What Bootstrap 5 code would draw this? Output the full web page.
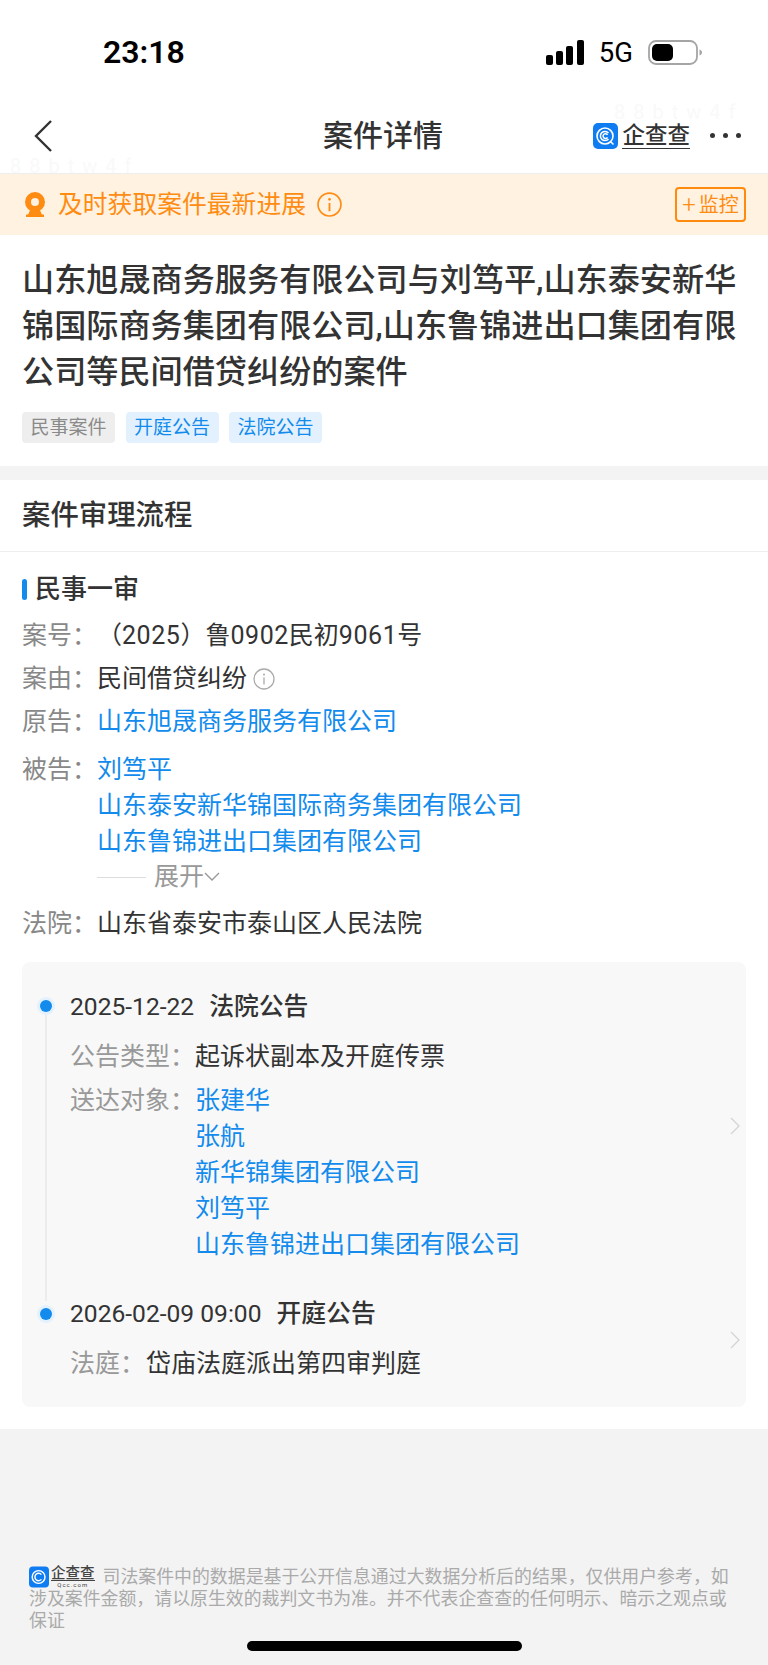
<!DOCTYPE html>
<html lang="zh-CN">
  <head>
    <meta charset="UTF-8" />
    <meta name="viewport" content="width=device-width, initial-scale=1.0" />
    <title>案件详情</title>
    <link href="https://cdn.jsdelivr.net/npm/bootstrap@5.3.0/dist/css/bootstrap.min.css" rel="stylesheet" />
    <style>
      html, body { height: 100%; }
      body {
        width: 768px;
        height: 1665px;
        overflow: hidden;
        background: #f3f3f3;
        color: #333;
        font-family: Roboto, "Noto Sans CJK SC", sans-serif;
        font-size: 25px;
        line-height: 36px;
      }
      .status-bar { height: 96px; background: #fff; padding: 36px 66px 0 103px; }
      .status-time { font-size: 32px; line-height: 32px; font-weight: 600; color: #000; }
      .status-net { font-size: 27.5px; line-height: 26px; color: #000; margin: 0 15px; }
      .top-nav { height: 78px; background: #fff; padding: 2px 27px 0 33px; border-bottom: 1px solid #eee; position: relative; }
      .nav-title { font-size: 30px; font-weight: 500; position: absolute; left: 323px; top: 21px; line-height: 38px; }
      .qcc-word { font-size: 22.5px; line-height: 25px; font-weight: 500; border-bottom: 1.5px solid #333; color: #333; margin-left: 4px; }
      .more-dot { width: 5px; height: 5px; border-radius: 50%; background: #333; }
      .notice-band { height: 61px; background: #fff2e0; color: #ff8c12; padding: 0 22px 0 24px; }
      .notice-text { margin: 0 11px 0 12px; font-size: 24.8px; }
      .watch-btn { width: 71px; height: 35px; border: 2px solid #ff8a0d; border-radius: 4px; font-size: 20px; line-height: 1; gap: 3px; }
      .plus-mark { font-size: 24px; font-weight: 300; }
      .head-block { background: #fff; height: 231px; padding: 22px 22px 0; }
      .case-title { font-size: 32.15px; line-height: 46px; font-weight: 500; color: #333; margin: 0 0 17px; }
      .tag-row { gap: 10.5px; }
      .case-tag { height: 31px; padding: 0 8.5px; border-radius: 4px; font-size: 19px; line-height: 31px; }
      .tag-grey { background: #eee; color: #8a8a8a; }
      .tag-blue { background: #e3f1fe; color: #128bed; }
      .flow-block { margin-top: 14px; background: #fff; height: 949px; }
      .flow-head { height: 72px; padding: 0 22px; font-size: 28.4px; font-weight: 500; line-height: 72px; border-bottom: 1px solid #eee; }
      .flow-body { padding: 19px 22px 0; }
      .stage-name { font-size: 26px; line-height: 36px; font-weight: 500; margin-bottom: 11px; }
      .stage-bar { width: 5px; height: 21px; border-radius: 3px; background: #128bed; margin-right: 8px; }
      .info-row { margin-bottom: 7px; }
      .info-key { width: 75px; flex: none; color: #888; }
      .info-link { color: #128bed; text-decoration: none; display: block; }
      .num-run { letter-spacing: .55px; }
      .info-tip { margin-left: 6px; }
      .multi-row { margin-top: 12px; }
      .expand-line { color: #999; line-height: 34px; height: 34px; margin-left: 75px; }
      .expand-rule { width: 49px; height: 1px; background: #ddd; margin-right: 8px; }
      .time-card { margin-top: 20px; height: 445px; background: #f8f8f8; border-radius: 8px; position: relative; padding: 27px 0 0 48px; }
      .time-rail { position: absolute; left: 23px; top: 48px; width: 1.5px; height: 291px; background: #ececec; }
      .time-dot { position: absolute; left: 18px; width: 12px; height: 12px; border-radius: 50%; background: #128bed; box-shadow: 0 0 0 3px #e3f1fe; }
      .time-head { font-weight: 500; line-height: 36px; margin-bottom: 14px; font-size: 24.8px; }
      .time-second { margin-top: 33px; }
      .time-date { font-size: 24.6px; margin-right: 15px; font-weight: 400; }
      .event-key { width: 125px; flex: none; color: #999; }
      .event-key-short { width: 76px; flex: none; color: #999; }
      .row-arrow { position: absolute; right: 5px; }
      .foot-note { padding: 137px 37px 0 29px; font-size: 17.9px; line-height: 22px; color: #aaa; }
      .mini-logo { display: inline-flex; vertical-align: -5px; align-items: center; margin: -2px 8px -2px 0; color: #444; }
      .mini-stack { display: inline-flex; flex-direction: column; align-items: center; margin-left: 2px; }
      .mini-word { font-size: 14.5px; line-height: 17px; height: 16px; font-weight: 500; border-bottom: 1px solid #444; }
      .mini-url { font-size: 6px; line-height: 8px; letter-spacing: 1px; }
      .home-bar { position: absolute; left: 247px; top: 1641px; width: 275px; height: 10px; border-radius: 5px; background: #000; }
      .ghost-mark { position: absolute; font-size: 20px; letter-spacing: 8px; color: #000; opacity: .02; line-height: 1; }
    </style>
  </head>

  <body>
    <div class="status-bar d-flex justify-content-between">
      <div class="status-time">23:18</div>
      <div class="d-flex align-items-start mt-1">
        <svg width="38" height="25" viewBox="0 0 38 25"><rect x="0" y="15" width="7" height="10" rx="2" fill="#000"/><rect x="10" y="11" width="7" height="14" rx="2" fill="#000"/><rect x="20" y="6" width="7" height="19" rx="2" fill="#000"/><rect x="31" y="0" width="7" height="25" rx="2" fill="#000"/></svg>
        <div class="status-net">5G</div>
        <svg width="54" height="25" viewBox="0 0 54 25"><rect x="1" y="1" width="48" height="23" rx="7" fill="none" stroke="#a5a5a5" stroke-width="1.8"/><rect x="4" y="4" width="21" height="17" rx="5" fill="#000"/><path d="M51.500 9.500c1.600.5 2.500 1.600 2.500 3s-.9 2.500-2.500 3z" fill="#a5a5a5"/></svg>
      </div>
    </div>

    <div class="top-nav d-flex align-items-center justify-content-between">
      <span class="ghost-mark" style="left:614px;top:6px">88btw4f</span>
      <span class="ghost-mark" style="left:10px;top:60px">88btw4f</span>
      <svg width="20" height="34" viewBox="0 0 20 34"><path d="M18 2 3 17l15 15" fill="none" stroke="#333" stroke-width="2.4"/></svg>
      <div class="nav-title">案件详情</div>
      <div class="d-flex align-items-center">
        <svg width="25" height="26" viewBox="0 0 25 26"><rect width="25" height="26" rx="5" fill="#0f7cf2"/><circle cx="12" cy="13" r="8" fill="none" stroke="#fff" stroke-width="1.6"/><path d="M15.500 10a4.600 4.600 0 1 0 0 6M14.500 11.800a2.400 2.400 0 1 0 0 2.600M17.500 18.500l3 3" fill="none" stroke="#fff" stroke-width="1.500"/></svg>
        <div class="qcc-word">企查查</div>
        <div class="d-flex ms-3 gap-2 ps-1"><div class="more-dot"></div><div class="more-dot"></div><div class="more-dot"></div></div>
      </div>
    </div>

    <div class="notice-band d-flex align-items-center">
      <svg width="22" height="25" viewBox="0 0 22 25"><circle cx="11" cy="10" r="10" fill="#ff8c12"/><circle cx="11" cy="10" r="4" fill="#fff2e0"/><path d="M6 18h10l2 5H4z" fill="#ff8c12"/><rect x="2" y="22.500" width="18" height="2.500" fill="#ff8c12"/></svg>
      <div class="notice-text">及时获取案件最新进展</div>
      <svg width="25" height="25" viewBox="0 0 24 24"><circle cx="12" cy="12" r="11" fill="none" stroke="#ff8c12" stroke-width="1.600"/><circle cx="12" cy="7" r="1.300" fill="#ff8c12"/><path d="M12 10.500v8" stroke="#ff8c12" stroke-width="1.800"/></svg>
      <div class="watch-btn d-flex align-items-center justify-content-center ms-auto"><span class="plus-mark">+</span><span>监控</span></div>
    </div>

    <div class="head-block">
      <h1 class="case-title">山东旭晟商务服务有限公司与刘笃平,山东泰安新华锦国际商务集团有限公司,山东鲁锦进出口集团有限公司等民间借贷纠纷的案件</h1>
      <div class="d-flex tag-row">
        <span class="case-tag tag-grey">民事案件</span>
        <span class="case-tag tag-blue">开庭公告</span>
        <span class="case-tag tag-blue">法院公告</span>
      </div>
    </div>

    <div class="flow-block">
      <div class="flow-head">案件审理流程</div>
      <div class="flow-body">
        <div class="stage-name d-flex align-items-center"><span class="stage-bar"></span>民事一审</div>
        <div class="info-row d-flex"><span class="info-key">案号：</span><span>（<span class="num-run">2025</span>）鲁<span class="num-run">0902</span>民初<span class="num-run">9061</span>号</span></div>
        <div class="info-row d-flex align-items-center"><span class="info-key">案由：</span><span>民间借贷纠纷</span>
          <svg class="info-tip" width="22" height="22" viewBox="0 0 22 22"><circle cx="11" cy="11" r="10" fill="none" stroke="#aaa" stroke-width="1.300"/><circle cx="11" cy="6.500" r="1" fill="#aaa"/><path d="M11 9.500v7" stroke="#aaa" stroke-width="1.300"/></svg>
        </div>
        <div class="info-row d-flex"><span class="info-key">原告：</span><a class="info-link" href="#">山东旭晟商务服务有限公司</a></div>
        <div class="d-flex multi-row"><span class="info-key">被告：</span>
          <div>
            <a class="info-link" href="#">刘笃平</a>
            <a class="info-link" href="#">山东泰安新华锦国际商务集团有限公司</a>
            <a class="info-link" href="#">山东鲁锦进出口集团有限公司</a>
          </div>
        </div>
        <div class="expand-line d-flex align-items-center"><span class="expand-rule"></span>展开
          <svg width="16" height="10" viewBox="0 0 16 10"><path d="M1 1l7 7 7-7" fill="none" stroke="#999" stroke-width="1.400"/></svg>
        </div>
        <div class="d-flex mt-2 pt-1"><span class="info-key">法院：</span><span>山东省泰安市泰山区人民法院</span></div>

        <div class="time-card">
          <div class="time-rail"></div>
          <div class="time-dot" style="top:38px"></div>
          <div class="time-head"><span class="time-date">2025-12-22</span>法院公告</div>
          <div class="d-flex info-row mb-2"><span class="event-key">公告类型：</span><span>起诉状副本及开庭传票</span></div>
          <div class="d-flex"><span class="event-key">送达对象：</span>
            <div>
              <a class="info-link" href="#">张建华</a>
              <a class="info-link" href="#">张航</a>
              <a class="info-link" href="#">新华锦集团有限公司</a>
              <a class="info-link" href="#">刘笃平</a>
              <a class="info-link" href="#">山东鲁锦进出口集团有限公司</a>
            </div>
          </div>
          <svg class="row-arrow" style="top:154px" width="12" height="20" viewBox="0 0 12 20"><path d="M2 2l8 8-8 8" fill="none" stroke="#d4d4d4" stroke-width="1.300"/></svg>

          <div class="time-dot" style="top:346px"></div>
          <div class="time-head time-second"><span class="time-date">2026-02-09 09:00</span>开庭公告</div>
          <div class="d-flex"><span class="event-key-short">法庭：</span><span>岱庙法庭派出第四审判庭</span></div>
          <svg class="row-arrow" style="top:368px" width="12" height="20" viewBox="0 0 12 20"><path d="M2 2l8 8-8 8" fill="none" stroke="#d4d4d4" stroke-width="1.300"/></svg>
        </div>
      </div>
    </div>

    <div class="foot-note">
      <span class="mini-logo">
        <svg width="20" height="22" viewBox="0 0 25 26"><rect width="25" height="26" rx="5" fill="#0f7cf2"/><circle cx="12" cy="13" r="8" fill="none" stroke="#fff" stroke-width="1.800"/><path d="M15.500 10a4.600 4.600 0 1 0 0 6" fill="none" stroke="#fff" stroke-width="1.800"/></svg>
        <span class="mini-stack"><span class="mini-word">企查查</span><span class="mini-url">Qcc.com</span></span>
      </span>司法案件中的数据是基于公开信息通过大数据分析后的结果，仅供用户参考，如涉及案件金额，请以原生效的裁判文书为准。并不代表企查查的任何明示、暗示之观点或保证
    </div>
    <div class="home-bar"></div>

    <script src="https://cdn.jsdelivr.net/npm/bootstrap@5.3.0/dist/js/bootstrap.bundle.min.js"></script>
  </body>
</html>
